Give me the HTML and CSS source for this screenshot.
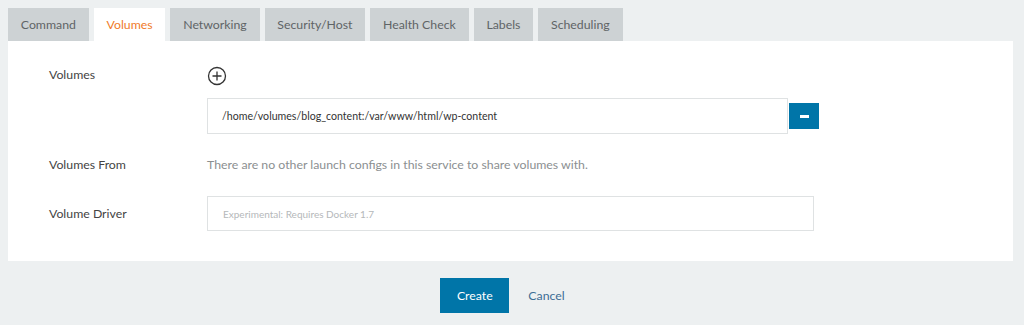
FILE: index.html
```html
<!DOCTYPE html>
<html lang="en">
<head>
  <meta charset="UTF-8">
  <title>Add Service - Volumes</title>
  <link rel="stylesheet" href="styles.css">
</head>
<body>
  <div class="tabs">
    <a href="#" class="tab">Command</a>
    <a href="#" class="tab active">Volumes</a>
    <a href="#" class="tab">Networking</a>
    <a href="#" class="tab">Security/Host</a>
    <a href="#" class="tab">Health Check</a>
    <a href="#" class="tab">Labels</a>
    <a href="#" class="tab">Scheduling</a>
  </div>

  <div class="panel">
    <div class="row row-volumes">
      <label class="label">Volumes</label>
      <div class="field">
        <button class="add-btn" aria-label="Add volume">
          <svg width="20" height="20" viewBox="0 0 20 20">
            <circle cx="10" cy="10" r="8.5" fill="none" stroke="#333" stroke-width="1.3"/>
            <path d="M10 5.5v9M5.5 10h9" stroke="#333" stroke-width="1.3"/>
          </svg>
        </button>
        <div class="volume-line">
          <input class="input" type="text" value="/home/volumes/blog_content:/var/www/html/wp-content">
          <button class="remove-btn" aria-label="Remove"><span class="minus"></span></button>
        </div>
      </div>
    </div>

    <div class="row row-from">
      <label class="label">Volumes From</label>
      <div class="field">
        <p class="help">There are no other launch configs in this service to share volumes with.</p>
      </div>
    </div>

    <div class="row row-driver">
      <label class="label">Volume Driver</label>
      <div class="field">
        <input class="input input-wide" type="text" placeholder="Experimental: Requires Docker 1.7">
      </div>
    </div>
  </div>

  <div class="footer">
    <button class="btn-primary">Create</button>
    <a href="#" class="btn-link">Cancel</a>
  </div>
</body>
</html>
```

FILE: styles.css
```css
/* Base */
body {
  margin: 0;
  padding: 8px 11px 0 8px;
  font-family: Lato, "Open Sans", sans-serif;
  font-size: 12.3px;
  color: #444;
  background-color: #edf0f1;
}

/* Tabs */
.tabs {
  display: flex;
  gap: 5px;
}

.tab {
  display: block;
  height: 33px;
  line-height: 33px;
  padding: 0 12.8px;
  background-color: #cdd2d4;
  color: #5f6466;
  text-decoration: none;
  font-size: 12.3px;
}

.tab.active {
  background-color: #fff;
  color: #f07b2a;
}

/* Panel */
.panel {
  background-color: #fff;
  padding: 24px 0 30px 41px;
}

.row {
  display: grid;
  grid-template-columns: 158px 1fr;
}

.label {
  color: #444;
  font-size: 12.3px;
  line-height: 20px;
}

.field {
  display: flex;
  flex-direction: column;
}

.add-btn {
  width: 20px;
  height: 20px;
  padding: 0;
  margin: 1px 0 0 0;
  border: none;
  background: none;
  cursor: pointer;
}

.add-btn svg {
  display: block;
}

.volume-line {
  display: flex;
  align-items: center;
  margin-top: 12px;
}

.input {
  box-sizing: border-box;
  width: 581px;
  height: 36px;
  padding: 0 14px;
  border: 1px solid #dfe2e3;
  font-family: Lato, "Open Sans", sans-serif;
  font-size: 10.6px;
  color: #333;
  outline: none;
}

.input::placeholder {
  color: #b5b8ba;
}

.input-wide {
  width: 607px;
  height: 35px;
  padding: 0 15px;
  font-size: 10px;
}

.remove-btn {
  width: 30px;
  height: 26px;
  margin-left: 1px;
  padding: 0;
  border: none;
  background-color: #0075a8;
  display: flex;
  align-items: center;
  justify-content: center;
}

.minus {
  display: block;
  width: 9px;
  height: 3px;
  background-color: #fff;
}

.row-from {
  margin-top: 21px;
}

.help {
  margin: 0;
  color: #8b8f91;
  font-size: 12.3px;
  line-height: 20px;
}

.row-driver {
  margin-top: 21px;
}

.row-driver .label {
  line-height: 35px;
}

/* Footer */
.footer {
  display: flex;
  align-items: center;
  justify-content: center;
  gap: 19px;
  padding: 17px 16px 0 0;
}

.btn-primary {
  width: 69px;
  height: 35px;
  border: none;
  background-color: #0075a8;
  color: #fff;
  font-family: Lato, "Open Sans", sans-serif;
  font-size: 12.3px;
}

.btn-link {
  color: #3d6e95;
  text-decoration: none;
  font-size: 12.3px;
}
```
